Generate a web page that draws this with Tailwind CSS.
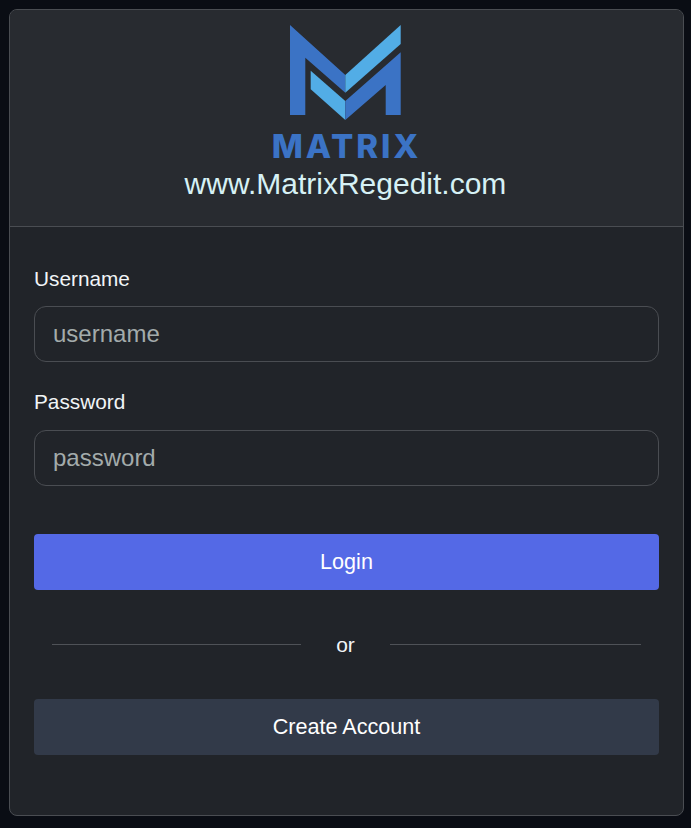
<!DOCTYPE html>
<html lang="en">
<head>
<meta charset="utf-8">
<title>Login</title>
<script src="https://cdn.jsdelivr.net/npm/@tailwindcss/browser@4"></script>
</head>
<body class="h-[828px] overflow-hidden bg-[#0a0d14] font-['Liberation_Sans',Arial,sans-serif]">
	<div class="p-[9px] pr-[7px] pb-[12px] h-full">
		<div class="h-full rounded-lg border border-[#4a4d52] bg-[#212429] flex flex-col overflow-hidden">
			<div class="h-[217px] shrink-0 border-b border-[#4a4d52] bg-[#282b30] flex flex-col items-center pt-[15px] pr-[2px]">
				<svg class="w-[111px] h-[95px] shrink-0" viewBox="290 25 111 95" xmlns="http://www.w3.org/2000/svg">
					<path fill="#3b73c5" d="M290 25 345.3 75V92.7L305.3 57.7V115H290Z" />
					<path fill="#52ade6" d="M345.3 75 400.7 25V44L345.3 92.7Z" />
					<path fill="#52ade6" d="M310.7 70.7 345.3 101V120L310.7 89.3Z" />
					<path fill="#3b73c5" d="M345.3 101 400.7 52.3V115H385.7V85L345.3 120Z" />
				</svg>
				<div class="mt-[12px] ml-[2px] h-[29px] leading-[29px] text-[33px] font-extrabold tracking-[2.9px] text-[#3b73c5] font-['Inter',sans-serif]">MATRIX</div>
				<div class="mt-[7px] text-[30px] leading-[32px] text-[#d6f1f5]">www.MatrixRegedit.com</div>
			</div>
			<form class="flex flex-col px-6 pt-[40px]">
				<label class="text-[20.8px] leading-6 text-[#f1f5f7]">Username</label>
				<input placeholder="username" class="mt-[15px] h-[56px] rounded-xl border border-[#4a4d52] bg-transparent px-[18px] text-[24px] text-white placeholder:text-[#a3abab] outline-none">
				<label class="mt-[28px] text-[20.8px] leading-6 text-[#f1f5f7]">Password</label>
				<input placeholder="password" class="mt-[16px] h-[56px] rounded-xl border border-[#4a4d52] bg-transparent px-[18px] text-[24px] text-white placeholder:text-[#a3abab] outline-none">
				<button type="button" class="mt-[48px] h-[56px] rounded bg-[#5469e6] text-[21.6px] text-white">Login</button>
				<div class="mt-[42px] px-[18px] h-[24px] flex items-center">
					<div class="w-[249px] h-px bg-[#4f5257]"></div>
					<span class="w-[89px] pt-[2px] text-center text-[21px] text-[#f1f5f7]">or</span>
					<div class="flex-1 h-px bg-[#4f5257]"></div>
				</div>
				<button type="button" class="mt-[43px] h-[56px] rounded bg-[#323a49] text-[21.6px] text-white">Create Account</button>
			</form>
		</div>
	</div>
</body>
</html>
